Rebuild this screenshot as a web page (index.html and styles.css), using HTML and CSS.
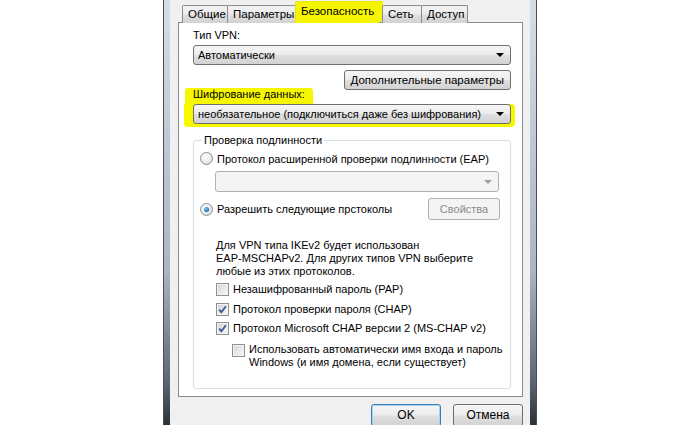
FILE: index.html
```html
<!DOCTYPE html>
<html lang="ru">
<head>
<meta charset="utf-8">
<title>Свойства VPN</title>
<link rel="stylesheet" href="styles.css">
</head>
<body>
<div class="window">
  <div class="frame frame-l"></div>
  <div class="dialog">
    <div class="tabs">
      <div class="tab t1">Общие</div>
      <div class="tab t2">Параметры</div>
      <div class="tab sel">Безопасность</div>
      <div class="tab t4">Сеть</div>
      <div class="tab t5">Доступ</div>
    </div>
    <div class="panel">
      <div class="label l1">Тип VPN:</div>
      <div class="combo">
        <span>Автоматически</span>
        <span class="arrow"></span>
      </div>
      <div class="btn-row">
        <div class="btn">Дополнительные параметры</div>
      </div>
      <div class="label hl-label">Шифрование данных:</div>
      <div class="hl-combo">
        <div class="combo">
          <span>необязательное (подключиться даже без шифрования)</span>
          <span class="arrow"></span>
        </div>
      </div>
      <fieldset class="group">
        <legend>Проверка подлинности</legend>
        <div class="row r1">
          <span class="radio"></span>
          <span>Протокол расширенной проверки подлинности (EAP)</span>
        </div>
        <div class="combo disabled">
          <span></span>
          <span class="arrow"></span>
        </div>
        <div class="row r2">
          <span class="radio on"></span>
          <span>Разрешить следующие прстоколы</span>
          <div class="btn disabled props">Свойства</div>
        </div>
        <div class="para">Для VPN типа IKEv2 будет использован<br>EAP-MSCHAPv2. Для других типов VPN выберите<br>любые из этих протоколов.</div>
        <div class="row chk c1">
          <span class="check"></span>
          <span>Незашифрованный пароль (PAP)</span>
        </div>
        <div class="row chk c2">
          <span class="check on"><svg viewBox="0 0 9 9" width="9" height="9"><path d="M1.2 4.6 L3.4 7.2 L7.9 1.2" fill="none" stroke="#3d5a92" stroke-width="1.9"/></svg></span>
          <span>Протокол проверки пароля (CHAP)</span>
        </div>
        <div class="row chk c3">
          <span class="check on"><svg viewBox="0 0 9 9" width="9" height="9"><path d="M1.2 4.6 L3.4 7.2 L7.9 1.2" fill="none" stroke="#3d5a92" stroke-width="1.9"/></svg></span>
          <span>Протокол Microsoft CHAP версии 2 (MS-CHAP v2)</span>
        </div>
        <div class="row chk c4">
          <span class="check"></span>
          <span>Использовать автоматически имя входа и пароль<br>Windows (и имя домена, если существует)</span>
        </div>
      </fieldset>
    </div>
    <div class="buttons">
      <div class="btn dlg default">OK</div>
      <div class="btn dlg">Отмена</div>
    </div>
  </div>
  <div class="frame frame-r"></div>
</div>
</body>
</html>
```

FILE: styles.css
```css
html, body {
  margin: 0;
  padding: 0;
  background: #ffffff;
  overflow: hidden;
}
body {
  font-family: "Liberation Sans", Arial, sans-serif;
  font-size: 11px;
  color: #000;
  width: 700px;
  height: 425px;
  white-space: nowrap;
}
.window {
  display: flex;
  margin-left: 163px;
  width: 374px;
  height: 450px;
}
.frame {
  flex: none;
  width: 6px;
  background: linear-gradient(#d6dde6 0%, #aab6c4 60%, #5b6673 85%, #111 100%);
}
.frame-l { border-left: 1px solid #4a4f55; }
.frame-r { border-right: 1px solid #4a4f55; }
.dialog {
  flex: 1;
  min-width: 0;
  background: #f0f0f0;
  padding: 2px 7px 0 8px;
  display: flex;
  flex-direction: column;
}
.tabs {
  display: flex;
  align-items: flex-end;
  height: 21px;
  padding-left: 4px;
  margin-bottom: -1px;
  position: relative;
  z-index: 1;
}
.tab {
  height: 17px;
  line-height: 17px;
  padding: 0 5px;
  border: 1px solid #898c95;
  border-bottom: none;
  border-radius: 2px 2px 0 0;
  margin-right: -1px;
  background: linear-gradient(#f3f3f3 0%, #ebebeb 45%, #dedede 55%, #d3d3d3 100%);
  box-sizing: content-box;
  overflow: hidden;
  font-size: 11.5px;
}
.tab.t1 { width: 34px; }
.tab.t2 { width: 58px; }
.tab.sel {
  height: 21px;
  line-height: 18px;
  width: 76px;
  background: #f5f500;
  border-color: #e8e800;
  border-radius: 2px 2px 6px 0;
  margin: 0 -1px 0 -1px;
}
.tab.t4 { width: 28px; }
.tab.t5 { width: 35px; }
.panel {
  background: #ffffff;
  border: 1px solid #898c95;
  height: 373px;
  padding: 0 11px 0 14px;
  display: flex;
  flex-direction: column;
  min-width: 0;
  overflow: hidden;
}
.label {
  height: 14px;
  line-height: 14px;
}
.l1 { margin-top: 5px; margin-bottom: 3px; }
.combo {
  height: 18px;
  border: 1px solid #707070;
  border-radius: 3px;
  background: linear-gradient(#f6f6f6 0%, #ececec 48%, #dfdfdf 52%, #d2d2d2 100%);
  display: flex;
  align-items: center;
  padding-left: 4px;
}
.combo .arrow {
  margin-left: auto;
  margin-right: 6px;
  width: 0;
  height: 0;
  border-top: 4px solid #000;
  border-left: 4px solid transparent;
  border-right: 4px solid transparent;
}
.combo.disabled {
  border-color: #adb2b5;
  background: #f4f4f4;
  height: 19px;
  margin: 5px 1px 0 15px;
}
.combo.disabled .arrow { border-top-color: #a0a0a0; }
.btn-row {
  display: flex;
  justify-content: flex-end;
  margin-top: 5px;
}
.btn {
  height: 18px;
  line-height: 18px;
  padding: 0 6px;
  border: 1px solid #707070;
  border-radius: 3px;
  background: linear-gradient(#f6f6f6 0%, #ececec 48%, #dfdfdf 52%, #d2d2d2 100%);
  text-align: center;
}
.btn-row .btn { font-size: 11.5px; }
.btn.disabled {
  color: #8a8a8a;
  border-color: #adb2b5;
  background: #f4f4f4;
}
.hl-label {
  align-self: flex-start;
  background: #f7f700;
  margin: -2px 0 0 -8px;
  padding: 0 8px;
  height: 16px;
  line-height: 13px;
  border-radius: 3px 3px 0 0;
}
.hl-combo {
  background: #f7f700;
  margin: 0 -4px 0 -9px;
  padding: 0 4px 3px 9px;
  border-radius: 0 4px 4px 4px;
}
.group {
  margin: 6px 0 0 0;
  padding: 0 10px 0 6px;
  border: 1px solid #d5dfe5;
  border-radius: 3px;
  box-sizing: border-box;
  height: 256px;
  display: flex;
  flex-direction: column;
  min-width: 0;
}
.group legend {
  padding: 0 2px;
  margin-left: 2px;
  line-height: 14px;
}
.row {
  display: flex;
  align-items: center;
  gap: 4px;
}
.r1 { margin-top: 4px; height: 15px; }
.r2 { margin-top: 6px; height: 22px; }
.props {
  margin-left: auto;
  width: 58px;
  height: 20px;
  line-height: 20px;
}
.radio {
  width: 11px;
  height: 11px;
  border: 1px solid #8e8f8f;
  border-radius: 50%;
  background: radial-gradient(circle at 40% 35%, #ffffff 0%, #f0f0f0 40%, #cfd1d4 100%);
  position: relative;
  flex: none;
}
.radio.on::after {
  content: "";
  position: absolute;
  left: 3px;
  top: 3px;
  width: 5px;
  height: 5px;
  border-radius: 50%;
  background: radial-gradient(circle at 40% 35%, #8fd0f5 0%, #2a7ac0 55%, #12406e 100%);
}
.para {
  margin: 19px 0 0 16px;
  line-height: 13px;
}
.chk { margin-left: 16px; }
.c1 { margin-top: 3px; height: 16px; }
.c2 { margin-top: 4px; height: 16px; }
.c3 { margin-top: 3px; height: 16px; }
.c4 { margin: 7px 0 0 32px; align-items: flex-start; line-height: 13px; gap: 4px; }
.c4 .check { margin-top: 1px; }
.check {
  width: 11px;
  height: 11px;
  border: 1px solid #8e8f8f;
  background: linear-gradient(135deg, #cbcfd5 0%, #e6e8eb 50%, #f6f6f6 100%);
  box-shadow: inset 0 0 0 1px #f4f4f4;
  display: flex;
  align-items: center;
  justify-content: center;
  flex: none;
}
.check svg { display: block; }
.buttons {
  display: flex;
  justify-content: flex-end;
  gap: 12px;
  margin-top: 7px;
}
.btn.dlg {
  width: 56px;
  height: 21px;
  line-height: 21px;
  font-size: 12px;
}
.btn.default {
  border-color: #3c7fb1;
  box-shadow: inset 0 0 0 1px #a6d5f2;
}
```
